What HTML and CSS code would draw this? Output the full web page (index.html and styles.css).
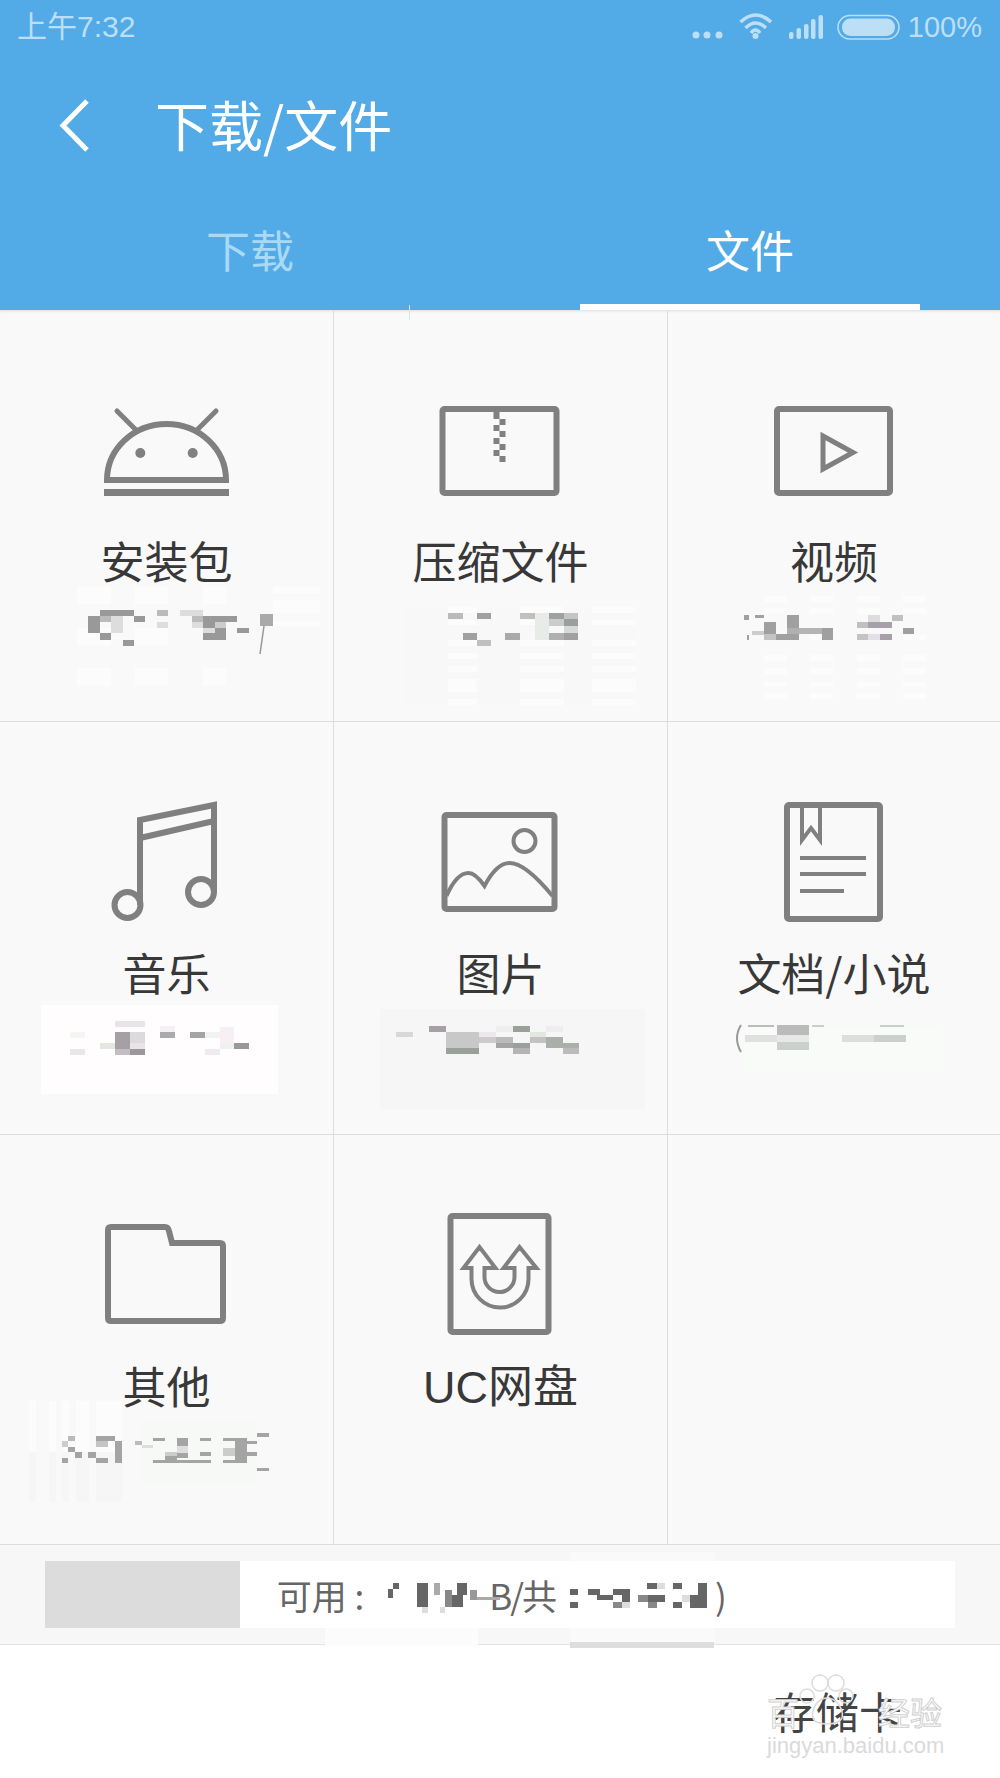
FILE: index.html
```html
<!DOCTYPE html>
<html>
<head>
  <meta charset="UTF-8">
  <title>下载/文件</title>
  <link rel="stylesheet" href="styles.css">
</head>
<body>
  <header class="header">
    <div class="status">
      <span class="clock">上午7:32</span>
      <div class="status-right">
        <svg class="status-icons" width="215" height="36" viewBox="690 10 215 36">
          <g fill="#bddff6">
            <circle cx="696" cy="36" r="3.5"/><circle cx="707" cy="36" r="3.5"/><circle cx="719" cy="36" r="3.5"/>
            <circle cx="755.5" cy="37" r="3"/>
            <rect x="789" y="33" width="4.5" height="7" rx="2"/><rect x="796.500" y="29" width="4.5" height="11" rx="2"/><rect x="804" y="25" width="4.5" height="15" rx="2"/><rect x="811" y="20" width="4.5" height="20" rx="2"/><rect x="818.500" y="16" width="4.5" height="24" rx="2"/>
            <rect x="842" y="19.500" width="53" height="17.500" rx="8.500"/>
          </g>
          <g fill="none" stroke="#bddff6" stroke-width="3.500">
            <path d="M740.500 23Q755.500 9 771 23"/><path d="M745.500 29Q755.500 19 766 29"/><path d="M751 34Q755.500 28 760 34"/>
          </g>
          <rect x="838" y="16.500" width="61" height="23.500" rx="11.700" fill="none" stroke="#bddff6" stroke-width="1.500"/>
        </svg>
        <span class="battery">100%</span>
      </div>
    </div>
    <div class="titlebar">
      <svg class="back" width="34" height="60" viewBox="58 96 34 60">
        <path d="M87 100L63 124.500L87 149" fill="none" stroke="#fff" stroke-width="5"/>
      </svg>
      <h1 class="title">下载/文件</h1>
    </div>
    <div class="tabs">
      <div class="tab">下载<i class="tick"></i></div>
      <div class="tab active">文件</div>
    </div>
  </header>

  <main class="grid">
    <div class="cell">
      <svg class="icon" viewBox="97 381 140 140">
        <path d="M107 480A59.500 56 0 0 1 226 480Z"/>
        <path d="M117 411L137 431M216 411L196 431" stroke-width="5" stroke-linecap="round"/>
        <g class="solid">
          <circle cx="140.300" cy="453" r="5"/><circle cx="192.700" cy="453" r="5"/>
          <rect x="104" y="489" width="125" height="7"/>
        </g>
      </svg>
      <div class="label">安装包</div>
    </div>
    <div class="cell">
      <svg class="icon" viewBox="431.500 381 140 140">
        <rect x="443" y="409" width="114" height="84" rx="2"/>
        <g class="solid">
          <rect x="494" y="410" width="6" height="9"/>
          <rect x="500" y="419" width="6" height="6"/><rect x="494" y="425" width="6" height="6"/>
          <rect x="500" y="431" width="6" height="6"/><rect x="494" y="438" width="6" height="6"/>
          <rect x="500" y="444" width="6" height="6"/><rect x="494" y="450" width="6" height="6"/>
          <rect x="500" y="456" width="6" height="6"/>
        </g>
      </svg>
      <div class="label">压缩文件</div>
    </div>
    <div class="cell last">
      <svg class="icon" viewBox="764 381 140 140">
        <rect x="777" y="409" width="113" height="84" rx="2"/>
        <path d="M823 436V469L853 452.500Z" stroke-width="5"/>
      </svg>
      <div class="label">视频</div>
    </div>

    <div class="cell">
      <svg class="icon" viewBox="97 793 140 140">
        <path d="M140 905V820L214 805V892M140 838L214 821"/>
        <circle cx="127.500" cy="905" r="13"/>
        <circle cx="201" cy="892" r="13"/>
      </svg>
      <div class="label">音乐</div>
    </div>
    <div class="cell">
      <svg class="icon" viewBox="431.500 793 140 140">
        <rect x="445" y="815" width="110" height="94" rx="2"/>
        <circle cx="525" cy="841" r="11" stroke-width="4"/>
        <path d="M447 896Q457 873 469 873Q476 873 485 886Q497 863 510 863Q526 863 553 896" stroke-width="4"/>
      </svg>
      <div class="label">图片</div>
    </div>
    <div class="cell last">
      <svg class="icon" viewBox="764 793 140 140">
        <rect x="787" y="805" width="93" height="114" rx="2"/>
        <path d="M802 806V840L811 828L820 840V806" stroke-width="4"/>
        <g class="solid">
          <rect x="800" y="856" width="66" height="4"/><rect x="800" y="872" width="66" height="4"/><rect x="800" y="889" width="44" height="4"/>
        </g>
      </svg>
      <div class="label">文档/小说</div>
    </div>

    <div class="cell">
      <svg class="icon" viewBox="97 1206 140 140">
        <path d="M108 1230Q108 1227 111 1227H165Q168 1227 169 1231L172 1243H220Q223 1243 223 1246V1318Q223 1321 220 1321H111Q108 1321 108 1318Z"/>
      </svg>
      <div class="label">其他</div>
    </div>
    <div class="cell">
      <svg class="icon" viewBox="431.500 1206 140 140">
        <rect x="451" y="1216" width="98" height="116" rx="2"/>
        <path d="M472 1268H464L480 1247L496 1268H485V1277A15 15 0 0 0 515 1277V1268H504L520 1247L537 1268H529V1279A28.500 28.500 0 0 1 472 1279Z" stroke-width="4"/>
      </svg>
      <div class="label uc">UC网盘</div>
    </div>
    <div class="cell last"></div>
  </main>

  <section class="storage">
    <div class="track">
      <div class="fill" style="width: 21.4%"></div>
      <span class="avail">可用 :</span>
      <span class="avail gb">B/共</span>
      <span class="avail paren">)</span>
    </div>
  </section>

  <footer class="footer">存储卡</footer>

  <svg class="censor" viewBox="0 0 1000 1778" width="1000" height="1778" shape-rendering="crispEdges">
    <!-- 安装包 -->
    <g fill="#fdfcfd">
      <rect x="77" y="587" width="34" height="17"/><rect x="135" y="587" width="33" height="17"/><rect x="203" y="587" width="23" height="17"/>
      <rect x="273" y="587" width="47" height="6"/><rect x="273" y="600" width="47" height="13"/><rect x="273" y="621" width="47" height="5"/>
      <rect x="77" y="628" width="34" height="17"/><rect x="135" y="628" width="33" height="17"/>
      <rect x="77" y="668" width="34" height="18"/><rect x="135" y="668" width="33" height="18"/><rect x="203" y="668" width="23" height="18"/>
    </g>
    <g fill="#999">
      <rect x="100" y="610" width="34" height="6"/><rect x="88" y="616" width="12" height="17"/><rect x="134" y="616" width="11" height="6"/>
      <rect x="100" y="633" width="11" height="7"/><rect x="123" y="640" width="11" height="6"/>
      <rect x="203" y="616" width="34" height="6"/><rect x="203" y="622" width="12" height="6"/><rect x="215" y="628" width="11" height="12"/>
      <rect x="203" y="633" width="12" height="7"/><rect x="237" y="628" width="12" height="5"/>
    </g>
    <rect x="100" y="616" width="11" height="6" fill="#bbb"/><rect x="111" y="616" width="12" height="17" fill="#ddd"/>
    <rect x="157" y="610" width="11" height="6" fill="#bbb"/><rect x="157" y="622" width="11" height="6" fill="#ddd"/>
    <rect x="180" y="610" width="23" height="6" fill="#ddd"/><rect x="192" y="616" width="11" height="6" fill="#bbb"/><rect x="192" y="622" width="11" height="6" fill="#ddd"/>
    <rect x="215" y="622" width="11" height="6" fill="#ccc"/><rect x="203" y="628" width="12" height="5" fill="#ddd"/>
    <rect x="260" y="614" width="13" height="12" fill="#aaa"/>
    <path d="M264 626L260 654" stroke="#999" stroke-width="1.500" fill="none" shape-rendering="auto"/>

    <!-- 压缩文件 -->
    <rect x="405" y="607" width="231" height="98" fill="#f8f8f8"/>
    <g fill="#fdfcfd">
      <rect x="448" y="607" width="29" height="6"/><rect x="520" y="607" width="44" height="6"/><rect x="592" y="607" width="44" height="6"/>
      <rect x="448" y="620" width="29" height="5"/><rect x="520" y="620" width="44" height="5"/><rect x="592" y="620" width="44" height="5"/>
      <rect x="448" y="640" width="29" height="6"/><rect x="520" y="640" width="44" height="6"/><rect x="592" y="640" width="44" height="6"/>
      <rect x="448" y="653" width="29" height="6"/><rect x="520" y="653" width="44" height="6"/><rect x="592" y="653" width="44" height="6"/>
      <rect x="448" y="666" width="29" height="6"/><rect x="520" y="666" width="44" height="6"/><rect x="592" y="666" width="44" height="6"/>
      <rect x="448" y="679" width="29" height="13"/><rect x="520" y="679" width="44" height="13"/><rect x="592" y="679" width="44" height="13"/>
      <rect x="448" y="699" width="29" height="6"/><rect x="520" y="699" width="44" height="6"/><rect x="592" y="699" width="44" height="6"/>
    </g>
    <rect x="535" y="613" width="14" height="27" fill="#e8ece8"/>
    <rect x="448" y="613" width="15" height="6" fill="#bbb"/><rect x="477" y="613" width="14" height="6" fill="#a0a0a0"/><rect x="520" y="613" width="15" height="6" fill="#c0c0c0"/>
    <rect x="549" y="613" width="15" height="6" fill="#a0a0a0"/><rect x="564" y="613" width="14" height="6" fill="#c4c4c4"/>
    <rect x="549" y="619" width="15" height="7" fill="#ccc"/><rect x="564" y="619" width="14" height="7" fill="#99a09a"/><rect x="564" y="626" width="14" height="7" fill="#d8d8d8"/>
    <rect x="463" y="633" width="14" height="7" fill="#a0a0a0"/><rect x="505" y="633" width="15" height="7" fill="#aaa"/><rect x="549" y="633" width="15" height="7" fill="#b0b0b0"/><rect x="564" y="633" width="14" height="7" fill="#a0a0a0"/>
    <rect x="477" y="640" width="14" height="6" fill="#c0c0c0"/>

    <!-- 视频 -->
    <g fill="#fdfcfd">
      <rect x="764" y="596" width="23" height="6"/><rect x="810" y="596" width="23" height="6"/><rect x="857" y="596" width="23" height="6"/><rect x="903" y="596" width="23" height="6"/>
      <rect x="764" y="608" width="23" height="6"/><rect x="810" y="608" width="23" height="6"/><rect x="857" y="608" width="23" height="6"/><rect x="903" y="608" width="23" height="6"/>
      <rect x="764" y="635" width="23" height="5"/><rect x="810" y="635" width="23" height="5"/><rect x="857" y="635" width="23" height="5"/><rect x="903" y="635" width="23" height="5"/>
      <rect x="764" y="655" width="23" height="6"/><rect x="810" y="655" width="23" height="6"/><rect x="857" y="655" width="23" height="6"/><rect x="903" y="655" width="23" height="6"/>
      <rect x="764" y="668" width="23" height="6"/><rect x="810" y="668" width="23" height="6"/><rect x="857" y="668" width="23" height="6"/><rect x="903" y="668" width="23" height="6"/>
      <rect x="764" y="682" width="23" height="5"/><rect x="810" y="682" width="23" height="5"/><rect x="857" y="682" width="23" height="5"/><rect x="903" y="682" width="23" height="5"/>
      <rect x="764" y="693" width="23" height="6"/><rect x="810" y="693" width="23" height="6"/><rect x="857" y="693" width="23" height="6"/><rect x="903" y="693" width="23" height="6"/>
    </g>
    <g fill="#a0a0a0">
      <rect x="764" y="622" width="12" height="12"/><rect x="776" y="634" width="23" height="6"/><rect x="787" y="615" width="12" height="13"/>
      <rect x="822" y="628" width="11" height="12"/><rect x="903" y="628" width="11" height="6"/>
      <rect x="744" y="615" width="5" height="5"/><rect x="755" y="615" width="9" height="3"/><rect x="747" y="635" width="2" height="5"/>
    </g>
    <rect x="764" y="634" width="12" height="6" fill="#c4c4c4"/><rect x="787" y="628" width="12" height="6" fill="#b0b0b0"/><rect x="799" y="628" width="23" height="6" fill="#b4b4b4"/>
    <rect x="752" y="631" width="12" height="4" fill="#ccc"/>
    <rect x="857" y="622" width="11" height="6" fill="#c0c0c0"/><rect x="868" y="615" width="12" height="7" fill="#ddd"/><rect x="868" y="622" width="24" height="6" fill="#a8a0a8"/>
    <rect x="892" y="615" width="11" height="6" fill="#c0c0c0"/><rect x="857" y="634" width="11" height="6" fill="#c4c4c4"/><rect x="868" y="634" width="12" height="6" fill="#e4e0e8"/><rect x="880" y="634" width="12" height="6" fill="#a8a0a8"/>

    <!-- 音乐 -->
    <rect x="41" y="1005" width="237" height="89" fill="#fffdfe"/>
    <rect x="115" y="1021" width="30" height="6" fill="#e8e4e8"/><rect x="115" y="1032" width="15" height="17" fill="#a4a0a4"/><rect x="130" y="1032" width="15" height="11" fill="#dcdadc"/>
    <rect x="130" y="1043" width="15" height="6" fill="#e8e4e8"/><rect x="115" y="1049" width="15" height="6" fill="#c4bcc4"/><rect x="130" y="1049" width="15" height="6" fill="#999"/>
    <rect x="100" y="1043" width="15" height="6" fill="#e0e8e0"/><rect x="70" y="1032" width="15" height="6" fill="#f4f6f4"/><rect x="70" y="1049" width="15" height="6" fill="#e8e8e8"/>
    <rect x="160" y="1026" width="15" height="6" fill="#f4f0f4"/><rect x="160" y="1032" width="15" height="6" fill="#aaa"/><rect x="190" y="1032" width="15" height="6" fill="#a4a4a4"/>
    <rect x="205" y="1032" width="29" height="6" fill="#f0f4f0"/><rect x="220" y="1027" width="14" height="16" fill="#f6f0f4"/><rect x="220" y="1043" width="14" height="6" fill="#eef2ee"/>
    <rect x="234" y="1043" width="15" height="6" fill="#999"/><rect x="205" y="1049" width="15" height="6" fill="#f0eaf0"/>

    <!-- 图片 -->
    <rect x="380" y="1009" width="265" height="100" fill="#f6f6f6"/>
    <rect x="396" y="1032" width="17" height="5" fill="#d8d8d8"/><rect x="429" y="1026" width="17" height="6" fill="#a4a0a4"/><rect x="446" y="1032" width="33" height="16" fill="#c8c8c8"/>
    <rect x="446" y="1048" width="33" height="6" fill="#9aa09a"/><rect x="479" y="1032" width="17" height="5" fill="#eee8ee"/><rect x="479" y="1037" width="17" height="6" fill="#ccc"/>
    <rect x="496" y="1037" width="17" height="6" fill="#bbb"/><rect x="496" y="1043" width="17" height="5" fill="#a4a4a4"/><rect x="513" y="1043" width="17" height="5" fill="#9aa09a"/>
    <rect x="513" y="1048" width="17" height="6" fill="#b4b4b4"/><rect x="513" y="1026" width="17" height="6" fill="#9aa09a"/><rect x="496" y="1026" width="17" height="6" fill="#eee"/>
    <rect x="530" y="1032" width="16" height="5" fill="#e0e8e0"/><rect x="530" y="1037" width="16" height="6" fill="#c4c0c4"/><rect x="546" y="1037" width="17" height="11" fill="#a8b0a8"/>
    <rect x="563" y="1043" width="16" height="5" fill="#aab0aa"/><rect x="563" y="1048" width="16" height="6" fill="#bbb"/><rect x="546" y="1026" width="17" height="6" fill="#eee"/>

    <!-- 文档/小说 -->
    <rect x="745" y="1027" width="192" height="45" fill="#f8fbf8"/>
    <path d="M741 1025Q733 1038 741 1052" stroke="#999" stroke-width="2" fill="none" shape-rendering="auto"/>
    <rect x="745" y="1035" width="32" height="7" fill="#e0e0e0"/><rect x="777" y="1025" width="32" height="10" fill="#bbb"/><rect x="777" y="1035" width="32" height="7" fill="#e8e8e8"/><rect x="777" y="1042" width="32" height="8" fill="#ccd0cc"/>
    <rect x="842" y="1035" width="32" height="7" fill="#ddd"/><rect x="874" y="1035" width="32" height="7" fill="#ccd0cc"/>
    <rect x="748" y="1025" width="26" height="2" fill="#bbb"/><rect x="812" y="1025" width="12" height="2" fill="#ccc"/><rect x="880" y="1025" width="24" height="2" fill="#ccc"/>

    <!-- 其他 -->
    <rect x="142" y="1422" width="115" height="63" fill="#f7f9f7"/>
    <g fill="#fdfcfd">
      <rect x="29" y="1401" width="7" height="51"/><rect x="49" y="1401" width="7" height="51"/><rect x="62" y="1401" width="7" height="51"/><rect x="76" y="1401" width="13" height="51"/><rect x="96" y="1401" width="26" height="51"/>
    </g>
    <g fill="#f6f6f6">
      <rect x="29" y="1452" width="7" height="50"/><rect x="49" y="1452" width="7" height="50"/><rect x="62" y="1452" width="7" height="50"/><rect x="76" y="1452" width="13" height="50"/><rect x="96" y="1452" width="26" height="50"/>
    </g>
    <rect x="68" y="1436" width="7" height="5" fill="#bbb"/><rect x="62" y="1441" width="6" height="6" fill="#ccc"/><rect x="135" y="1441" width="7" height="4" fill="#bbb"/><rect x="142" y="1445" width="11" height="3" fill="#ddd"/>
    <rect x="96" y="1441" width="12" height="6" fill="#c4c4c4"/><rect x="165" y="1452" width="12" height="4" fill="#ccc"/><rect x="177" y="1446" width="11" height="7" fill="#ddd"/><rect x="223" y="1448" width="12" height="8" fill="#ccc"/>
    <g fill="#a4a4a4">
      <rect x="68" y="1447" width="7" height="5"/><rect x="75" y="1452" width="7" height="6"/><rect x="88" y="1452" width="8" height="6"/><rect x="62" y="1458" width="6" height="5"/>
      <rect x="96" y="1436" width="19" height="5"/><rect x="115" y="1441" width="7" height="22"/><rect x="96" y="1458" width="12" height="5"/>
      <rect x="153" y="1438" width="12" height="3"/><rect x="177" y="1438" width="11" height="8"/><rect x="177" y="1453" width="11" height="5"/><rect x="165" y="1456" width="12" height="7"/><rect x="153" y="1460" width="58" height="3"/>
      <rect x="200" y="1438" width="11" height="3"/><rect x="200" y="1452" width="11" height="4"/><rect x="223" y="1438" width="12" height="3"/><rect x="235" y="1438" width="12" height="25"/>
      <rect x="247" y="1441" width="10" height="3"/><rect x="247" y="1452" width="10" height="4"/><rect x="223" y="1460" width="12" height="3"/><rect x="257" y="1433" width="12" height="4"/><rect x="257" y="1468" width="12" height="3"/>
    </g>

    <!-- 可用 -->
    <rect x="570" y="1552" width="144" height="9" fill="#fafafa"/><rect x="325" y="1628" width="153" height="18" fill="#fcfcfc"/><rect x="570" y="1628" width="144" height="14" fill="#fafafa"/><rect x="570" y="1642" width="144" height="6" fill="#ddd"/>
    <g fill="#666">
      <rect x="393" y="1583" width="6" height="6"/><rect x="388" y="1589" width="5" height="9"/><rect x="417" y="1583" width="11" height="24"/><rect x="452" y="1595" width="11" height="12"/><rect x="457" y="1583" width="10" height="12"/>
      <rect x="570" y="1589" width="8" height="6"/><rect x="570" y="1602" width="8" height="6"/><rect x="588" y="1589" width="12" height="6"/><rect x="597" y="1595" width="16" height="5"/><rect x="613" y="1589" width="9" height="6"/><rect x="622" y="1589" width="8" height="13"/>
      <rect x="647" y="1583" width="10" height="6"/><rect x="648" y="1595" width="17" height="7"/><rect x="673" y="1583" width="9" height="6"/><rect x="673" y="1602" width="9" height="6"/><rect x="698" y="1583" width="9" height="25"/><rect x="690" y="1595" width="8" height="13"/>
    </g>
    <g fill="#888">
      <rect x="445" y="1590" width="7" height="17"/><rect x="613" y="1602" width="9" height="6"/><rect x="638" y="1595" width="10" height="7"/><rect x="648" y="1602" width="9" height="6"/>
    </g>
    <g fill="#ddd">
      <rect x="422" y="1607" width="6" height="6"/><rect x="622" y="1602" width="8" height="6"/><rect x="657" y="1583" width="8" height="6"/><rect x="682" y="1595" width="8" height="7"/><rect x="440" y="1607" width="5" height="6"/>
    </g>
    <rect x="434" y="1583" width="6" height="12" fill="#aaa"/><rect x="470" y="1590" width="7" height="10" fill="#999"/><rect x="477" y="1597" width="23" height="3" fill="#aaa"/>
  </svg>

  <div class="watermark">
    <div class="wm-name"><span>百</span>
      <svg class="paw" width="60" height="62" viewBox="0 0 60 62">
        <circle cx="21" cy="13" r="8"/><circle cx="37" cy="13" r="8"/><circle cx="8" cy="26" r="7"/><circle cx="47" cy="26" r="7"/>
        <path d="M28 28C18 28 12 40 14 48C16 56 40 56 43 48C45 40 38 28 28 28Z"/>
      </svg>
      <span>经验</span></div>
    <div class="wm-url">jingyan.baidu.com</div>
  </div>
</body>
</html>
```

FILE: styles.css
```css
* {
  box-sizing: border-box;
}
html,
body {
  margin: 0;
  padding: 0;
}
body {
  width: 1000px;
  height: 1778px;
  overflow: hidden;
  background: #fff;
  font-family: "Noto Sans CJK SC", "Liberation Sans", sans-serif;
  color: #383838;
}

.header {
  height: 310px;
  background: #52abe6;
  color: #fff;
}
.status {
  height: 54px;
  padding: 0 18px 0 17px;
  display: flex;
  justify-content: space-between;
  align-items: center;
  color: #bddff6;
  font-size: 30px;
  line-height: 54px;
  font-family: "Liberation Sans", "Noto Sans CJK SC", sans-serif;
}
.status-right {
  display: flex;
  align-items: center;
}
.battery {
  margin-left: 3px;
  font-size: 29px;
}
.status-icons {
  display: block;
}
.titlebar {
  height: 146px;
  padding-left: 58px;
  display: flex;
  align-items: center;
}
.back {
  display: block;
}
.title {
  margin: 0 0 6px 63px;
  font-size: 54px;
  font-weight: 400;
  line-height: 60px;
}
.tabs {
  height: 110px;
  display: flex;
}
.tab {
  flex: 1;
  position: relative;
  padding-bottom: 12px;
  display: flex;
  justify-content: center;
  align-items: center;
  font-size: 44px;
  color: #a9d9f5;
}
.tab.active {
  color: #fff;
}
.tab.active::after {
  content: "";
  position: absolute;
  left: 80px;
  bottom: 0;
  width: 340px;
  height: 6px;
  background: #fff;
}
.tick {
  position: absolute;
  left: 409px;
  bottom: -10px;
  width: 1px;
  height: 15px;
  background: #d8e4ec;
  z-index: 1;
}

.grid {
  height: 1235px;
  display: grid;
  grid-template-columns: 334px 334px 332px;
  grid-template-rows: 412px 413px 410px;
  background: #f9f9f9;
  box-shadow: inset 0 3px 3px -2px #ddd;
}
.cell {
  padding-top: 71px;
  border-right: 1px solid #ddd;
  border-bottom: 1px solid #ddd;
  display: flex;
  flex-direction: column;
  align-items: center;
}
.cell.last {
  border-right: 0;
}
.icon {
  display: block;
  width: 140px;
  height: 140px;
  fill: none;
  stroke: #808080;
  stroke-width: 6;
}
.icon .solid {
  fill: #808080;
  stroke: none;
}
.label {
  margin-top: 9px;
  font-size: 44px;
  line-height: 60px;
  white-space: nowrap;
}
.label.uc {
  margin-top: 12px;
  font-family: "Liberation Sans", "Noto Sans CJK SC", sans-serif;
  font-size: 45px;
}

.storage {
  height: 100px;
  padding: 16px 45px 0;
  background: #f7f7f7;
  border-bottom: 1px solid #e4e4e4;
}
.track {
  height: 67px;
  display: flex;
  align-items: center;
  background: #fff;
}
.fill {
  height: 100%;
  background: #dcdcdc;
}
.avail {
  margin-left: 37px;
  font-size: 35px;
  color: #666;
  white-space: nowrap;
}
.avail.gb {
  margin-left: 125px;
  letter-spacing: -2px;
}
.avail.paren {
  margin-left: 160px;
}

.footer {
  height: 133px;
  padding: 0 98px 4px 0;
  display: flex;
  justify-content: flex-end;
  align-items: center;
  font-size: 43px;
  color: #444;
}

/* mosaic over the blurred sizes, drawn in page coordinates */
.censor {
  position: absolute;
  left: 0;
  top: 0;
  pointer-events: none;
}
.watermark {
  position: absolute;
  left: 767px;
  top: 1670px;
  width: 180px;
  color: #e4e4e4;
}
.wm-name {
  display: flex;
  align-items: flex-end;
  height: 62px;
  font-size: 32px;
  line-height: 42px;
  color: #fff;
  -webkit-text-stroke: 1px #cfcfcf;
}
.paw {
  display: block;
  margin: 0 19px 0 0;
  fill: none;
  stroke: #dcdcdc;
  stroke-width: 1.5;
}
.wm-url {
  margin-top: 2px;
  font-size: 22px;
  line-height: 24px;
  font-family: "Liberation Sans", sans-serif;
  color: #dadada;
  white-space: nowrap;
}
```
